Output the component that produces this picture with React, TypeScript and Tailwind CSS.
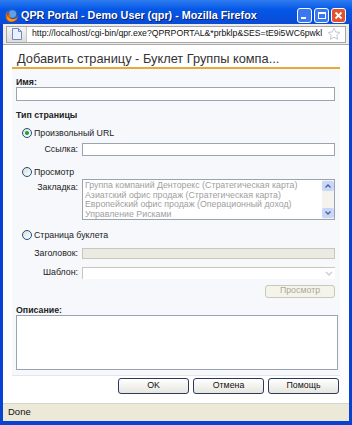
import React from 'react';

function Radio({ checked }: { checked?: boolean }) {
  return (
    <span className="w-[10px] h-[10px] rounded-full border border-[#1c5180] bg-[linear-gradient(135deg,#dcdcd5,#ffffff)] flex items-center justify-center shrink-0">
      {checked && <span className="w-[4px] h-[4px] rounded-full bg-[#21a121]" />}
    </span>
  );
}

function FirefoxIcon() {
  return (
    <svg width="15" height="15" viewBox="0 0 16 16">
      <circle cx="8" cy="8" r="7" fill="#2b5db8" />
      <circle cx="9" cy="6.5" r="4" fill="#5fa0e8" />
      <path d="M2 9c0 4 3 6 6 6 4 0 7-3 7-7-1 3-3 4-5 4-3 0-4-2-4-4 0-1 1-2 1-2-2 0-3 1-3 2C3 7 3 5 5 3 3 4 2 6 2 9z" fill="#e66000" />
      <path d="M3 10c1 3 3 4 5 4 3 0 5-2 6-4-1 1-3 2-5 2-2 0-4-1-5-3z" fill="#f9a21b" />
    </svg>
  );
}

const listItems = [
  'Группа компаний Денторекс (Стратегическая карта)',
  'Азиатский офис продаж (Стратегическая карта)',
  'Европейский офис продаж (Операционный доход)',
  'Управление Рисками',
];

export default function App() {
  return (
    <div className="w-[352px] h-[425px] flex flex-col bg-[#0842d4] font-['Liberation_Sans',Arial,sans-serif] overflow-hidden">
      {/* Title bar */}
      <div className="h-[24px] shrink-0 flex items-center pl-[4px] pr-[6px] pt-[6px] bg-[linear-gradient(180deg,#2f7cf0,#0457e6_40%,#0a4bd6)]">
        <FirefoxIcon />
        <span className="ml-[2px] text-white font-bold text-[10.8px] [text-shadow:1px_1px_0_#0a1f6e] whitespace-nowrap">
          QPR Portal - Demo User (qpr) - Mozilla Firefox
        </span>
        <div className="ml-auto flex gap-[2px]">
          <div className="w-[15px] h-[15px] rounded-[3px] border border-white bg-[#3a78f2] flex items-end pb-[3px] pl-[3px]">
            <span className="w-[5px] h-[2px] bg-white" />
          </div>
          <div className="w-[15px] h-[15px] rounded-[3px] border border-white bg-[#3a78f2] flex items-center justify-center">
            <span className="w-[8px] h-[7px] border border-white border-t-2" />
          </div>
          <div className="w-[15px] h-[15px] rounded-[3px] border border-white bg-[#e0532e] flex items-center justify-center">
            <svg width="9" height="9" viewBox="0 0 9 9">
              <path d="M1.5 1.5l6 6M7.5 1.5l-6 6" stroke="white" strokeWidth="1.8" />
            </svg>
          </div>
        </div>
      </div>

      <div className="flex-1 mx-[3px] flex flex-col min-h-0">
        {/* URL bar */}
        <div className="h-[20px] shrink-0 bg-[#eeede5] px-[3px] flex items-center">
          <div className="flex-1 h-[17px] bg-white border border-[#a7a6aa] flex items-center">
            <div className="w-[20px] h-full bg-[linear-gradient(180deg,#f6f6f6,#dcdcdc)] border-r border-[#c5c5c5] flex items-center justify-center">
              <svg width="10" height="12" viewBox="0 0 10 12">
                <path d="M0.5 0.5h6l3 3v8h-9z" fill="#eaf2ff" stroke="#7189b8" />
                <path d="M6.5 0.5v3h3" fill="none" stroke="#7189b8" />
              </svg>
            </div>
            <span className="ml-[5px] text-[8.7px] text-[#111] whitespace-nowrap overflow-hidden flex-1">
              http://localhost/cgi-bin/qpr.exe?QPRPORTAL&amp;*prbklp&amp;SES=tE9i5WC6pwkl
            </span>
            <svg width="14" height="14" viewBox="0 0 24 24" className="mr-[4px] shrink-0">
              <path d="M12 2l3 6.5 7 .8-5.2 4.8 1.5 7L12 17.5 5.7 21.1l1.5-7L2 9.3l7-.8z" fill="white" stroke="#b9bfcb" strokeWidth="1.5" />
            </svg>
          </div>
        </div>

        {/* Content */}
        <div className="flex-1 bg-white flex flex-col px-[9px] pt-[6px] border-t border-[#a9a9a9]">
          <div className="text-[12.8px] text-[#333] leading-[15px] pl-[5px]">Добавить страницу - Буклет Группы компа...</div>
          <div className="h-[2px] bg-[#e9a93a] mt-[1px]" />
          <div className="bg-[#f6f8fc] border-b border-[#e1e5ee] pl-[4px] pr-[5px] pt-[9px] pb-[5px] flex flex-col text-[8.8px] text-[#222]">
            <div className="font-bold leading-[9px]">Имя:</div>
            <div className="h-[14px] bg-white border border-[#9aa3b0]" />
            <div className="font-bold leading-[10px] mt-[9px]">Тип страницы</div>

            <div className="flex items-center gap-[2px] mt-[8px] pl-[6px] leading-[10px]">
              <Radio checked />
              <span>Произвольный URL</span>
            </div>
            <div className="flex items-center mt-[5px]">
              <span className="w-[66px] text-right pr-[4px]">Ссылка:</span>
              <div className="flex-1 h-[13px] bg-white border border-[#9aa3b0]" />
            </div>

            <div className="flex items-center gap-[2px] mt-[11px] pl-[6px] leading-[10px]">
              <Radio />
              <span>Просмотр</span>
            </div>
            <div className="flex items-start mt-[2px]">
              <span className="w-[66px] text-right pr-[4px] pt-[2px]">Закладка:</span>
              <div className="flex-1 h-[41px] bg-white border border-[#9aa3b0] flex">
                <div className="flex-1 flex flex-col pl-[2px] pt-[1px] text-[#a0a0a0] leading-[9.6px] overflow-hidden whitespace-nowrap">
                  {listItems.map((t) => (
                    <span key={t}>{t}</span>
                  ))}
                </div>
                <div className="w-[12px] bg-[#f4f3ee] flex flex-col justify-between py-[1px]">
                  <div className="h-[10px] rounded-[2px] bg-[#c8d6fb] flex items-center justify-center">
                    <svg width="6" height="4" viewBox="0 0 6 4"><path d="M0.5 3.5L3 1l2.5 2.5" fill="none" stroke="#4d6185" strokeWidth="1.3" /></svg>
                  </div>
                  <div className="h-[10px] rounded-[2px] bg-[#c8d6fb] flex items-center justify-center">
                    <svg width="6" height="4" viewBox="0 0 6 4"><path d="M0.5 0.5L3 3l2.5-2.5" fill="none" stroke="#4d6185" strokeWidth="1.3" /></svg>
                  </div>
                </div>
              </div>
            </div>

            <div className="flex items-center gap-[2px] mt-[10px] pl-[6px] leading-[10px]">
              <Radio />
              <span>Страница буклета</span>
            </div>
            <div className="flex items-center mt-[7px]">
              <span className="w-[66px] text-right pr-[4px]">Заголовок:</span>
              <div className="flex-1 h-[11px] bg-[#ebebe4] border border-[#c9c7ba]" />
            </div>
            <div className="flex items-center mt-[6px]">
              <span className="w-[66px] text-right pr-[4px]">Шаблон:</span>
              <div className="flex-1 h-[12px] bg-white border-l border-t border-[#c9c7ba] flex justify-end items-center pr-[2px]">
                <svg width="8" height="5" viewBox="0 0 8 5"><path d="M1 1l3 3 3-3" fill="none" stroke="#c9ccd4" strokeWidth="1.3" /></svg>
              </div>
            </div>
            <div className="flex justify-end mt-[5px]">
              <div className="w-[70px] h-[13px] rounded-[3px] bg-[#f5f4ea] border border-[#c9c7ba] flex items-center justify-center text-[#aca899]">
                Просмотр
              </div>
            </div>

            <div className="font-bold leading-[10px] mt-[7px]">Описание:</div>
            <div className="h-[55px] mr-[-3px] bg-white border border-[#9aa3b0]" />
          </div>

          <div className="flex justify-end gap-[4px] mt-[2px] mr-[1px] text-[8.8px] text-[#111]">
            {['OK', 'Отмена', 'Помощь'].map((b) => (
              <div key={b} className="w-[71px] h-[16px] rounded-[3px] border border-[#2b3a5e] bg-[linear-gradient(180deg,#ffffff,#e6e5de)] flex items-center justify-center">
                {b}
              </div>
            ))}
          </div>
        </div>

        {/* Status bar */}
        <div className="h-[18px] shrink-0 bg-[#ece9d8] border-t border-[#d8d5c6] flex items-center pl-[5px] text-[9.5px] text-[#111]">
          Done
        </div>
      </div>
      <div className="h-[4px] shrink-0" />
    </div>
  );
}
